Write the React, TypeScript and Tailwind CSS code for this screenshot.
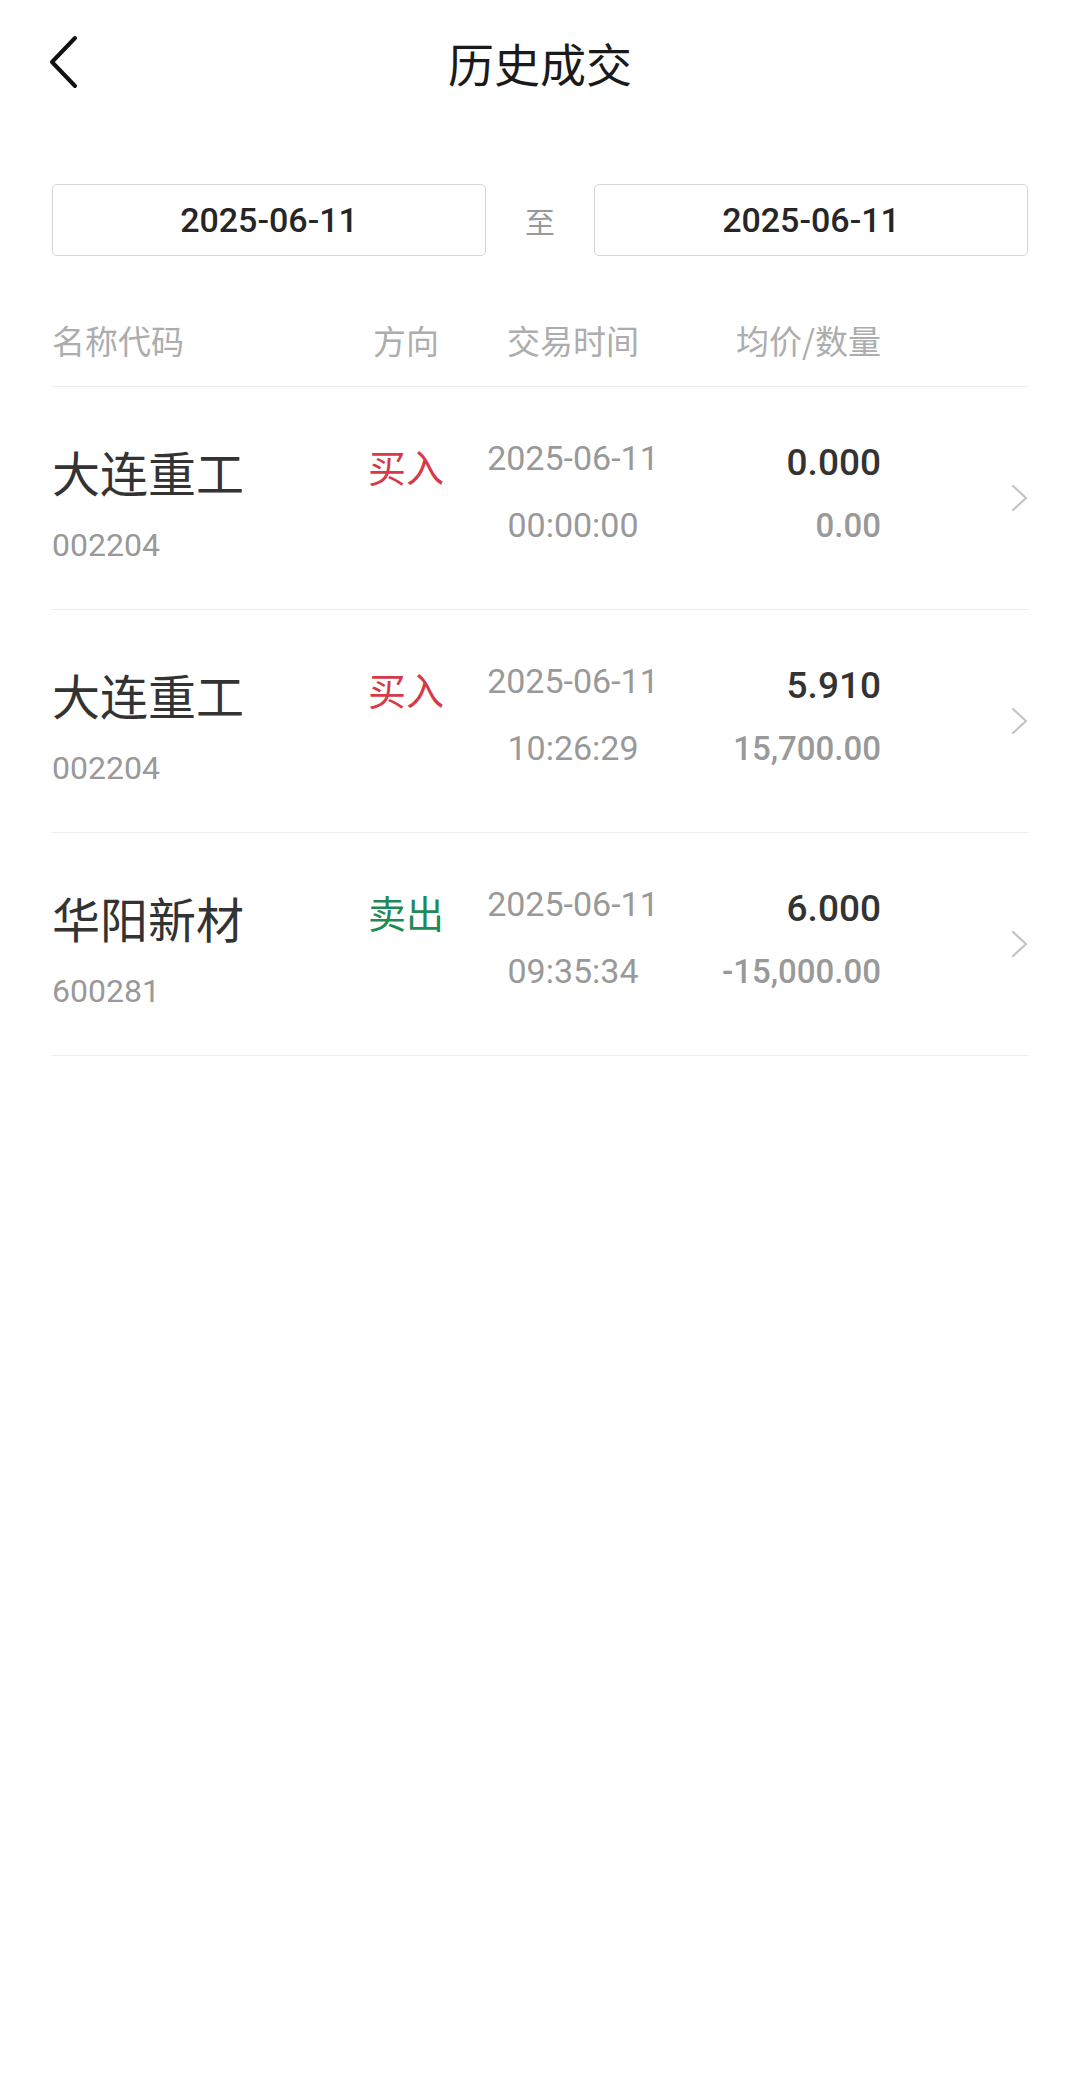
import React from "react";

type Trade = {
  name: string;
  code: string;
  side: "buy" | "sell";
  date: string;
  time: string;
  price: string;
  qty: string;
};

const trades: Trade[] = [
  { name: "大连重工", code: "002204", side: "buy", date: "2025-06-11", time: "00:00:00", price: "0.000", qty: "0.00" },
  { name: "大连重工", code: "002204", side: "buy", date: "2025-06-11", time: "10:26:29", price: "5.910", qty: "15,700.00" },
  { name: "华阳新材", code: "600281", side: "sell", date: "2025-06-11", time: "09:35:34", price: "6.000", qty: "-15,000.00" },
];

const cjk = "font-['Noto_Sans_CJK_SC',sans-serif]";
const num = "font-['Roboto','Noto_Sans_CJK_SC',sans-serif]";

function Chevron() {
  return (
    <svg width="17" height="28" viewBox="0 0 17 28" fill="none">
      <path d="M2 2l13 12L2 26" stroke="#c4c4c4" strokeWidth="2.2" strokeLinecap="round" strokeLinejoin="round" />
    </svg>
  );
}

function TradeRow({ t }: { t: Trade }) {
  return (
    <div className="flex h-[223px] items-start border-b border-[#ececec]">
      <div className="w-[309px] pt-[55px]">
        <div className={`${cjk} text-[48px] leading-[58px] text-[#333]`}>{t.name}</div>
        <div className={`${num} mt-[25px] text-[32px] leading-[40px] text-[#999]`}>{t.code}</div>
      </div>
      <div
        className={`${cjk} w-[90px] pt-[56px] text-center text-[38px] leading-[46px] ${
          t.side === "buy" ? "text-[#d63a48]" : "text-[#1f8a55]"
        }`}
      >
        {t.side === "buy" ? "买入" : "卖出"}
      </div>
      <div className={`${num} w-[244px] pt-[51px] text-center text-[34px] leading-[41px] text-[#999]`}>
        <div>{t.date}</div>
        <div className="mt-[26px]">{t.time}</div>
      </div>
      <div className={`${num} w-[186px] pt-[53px] text-right font-medium`}>
        <div className="text-[37px] leading-[45px] text-[#333]">{t.price}</div>
        <div className="mt-[20px] text-[33px] leading-[41px] text-[#999]">{t.qty}</div>
      </div>
      <div className="flex h-full flex-1 items-center justify-end">
        <Chevron />
      </div>
    </div>
  );
}

export default function App() {
  return (
    <main className="min-h-[2087px] w-[1080px] bg-white">
      <header className="grid h-[124px] grid-cols-[1fr_auto_1fr] items-center px-[48px]">
        <button type="button" className="flex h-[56px] w-[40px] items-center justify-start">
          <svg width="30" height="54" viewBox="0 0 30 54" fill="none">
            <path d="M27 3L4 27l23 24" stroke="#111" strokeWidth="4" strokeLinecap="round" strokeLinejoin="round" />
          </svg>
        </button>
        <h1 className={`${cjk} text-[46px] leading-[56px] text-[#1a1a1a]`}>历史成交</h1>
        <div />
      </header>

      <div className="mt-[60px] flex items-center px-[52px]">
        <div className={`${num} flex h-[72px] w-[434px] items-center justify-center rounded-[5px] border border-[#d4d4d4] text-[34px] font-medium text-[#262626]`}>
          2025-06-11
        </div>
        <div className={`${cjk} flex-1 text-center text-[30px] text-[#999]`}>至</div>
        <div className={`${num} flex h-[72px] w-[434px] items-center justify-center rounded-[5px] border border-[#d4d4d4] text-[34px] font-medium text-[#262626]`}>
          2025-06-11
        </div>
      </div>

      <section className="px-[52px]">
        <div className={`${cjk} mt-[64px] flex border-b border-[#ececec] pb-[26px] text-[33px] leading-[40px] text-[#adadad]`}>
          <div className="w-[309px]">名称代码</div>
          <div className="w-[90px] text-center">方向</div>
          <div className="w-[244px] text-center">交易时间</div>
          <div className="w-[186px] text-right">均价/数量</div>
        </div>
        {trades.map((t, i) => (
          <TradeRow key={i} t={t} />
        ))}
      </section>
    </main>
  );
}
